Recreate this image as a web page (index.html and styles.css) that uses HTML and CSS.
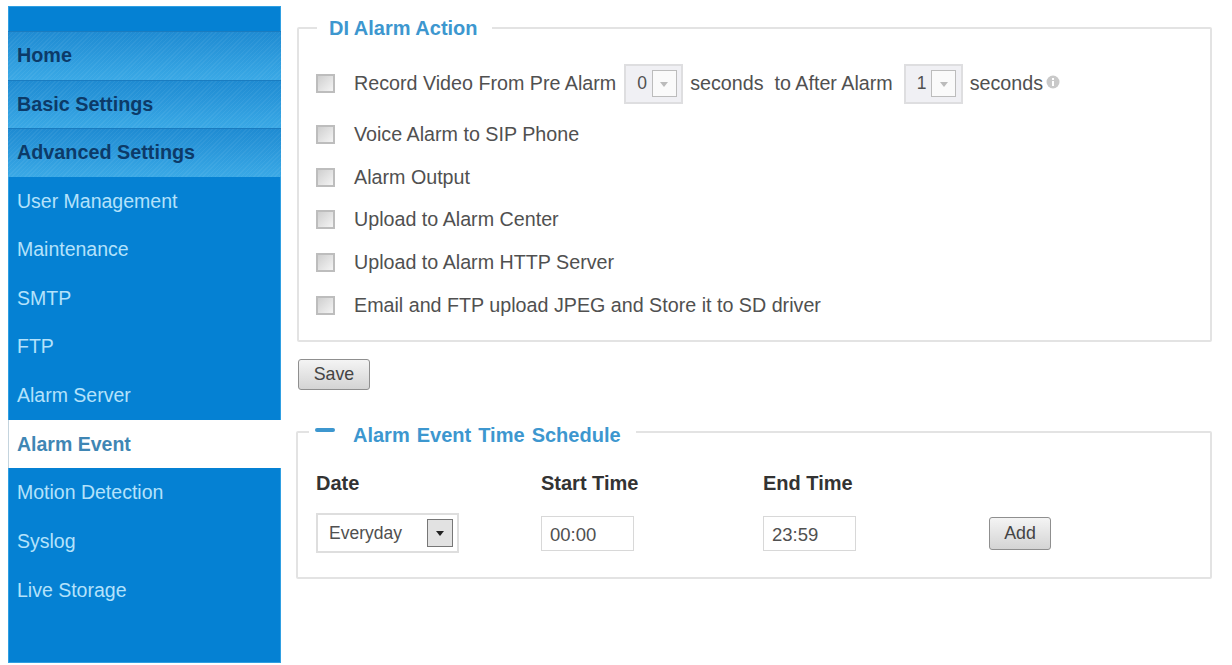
FILE: index.html
```html
<!DOCTYPE html>
<html lang="en">

<head>
    <meta charset="UTF-8">
    <title>Alarm Event</title>
    <link rel="stylesheet" href="styles.css">
</head>

<body>
    <div class="menu">
        <div class="menu-top"></div>
        <a class="menu-head" href="#">Home</a>
        <a class="menu-head" href="#">Basic Settings</a>
        <a class="menu-head" href="#">Advanced Settings</a>
        <a class="menu-item" href="#">User Management</a>
        <a class="menu-item" href="#">Maintenance</a>
        <a class="menu-item" href="#">SMTP</a>
        <a class="menu-item" href="#">FTP</a>
        <a class="menu-item" href="#">Alarm Server</a>
        <a class="menu-item active" href="#">Alarm Event</a>
        <a class="menu-item" href="#">Motion Detection</a>
        <a class="menu-item" href="#">Syslog</a>
        <a class="menu-item" href="#">Live Storage</a>
    </div>
    <div class="content">
        <fieldset class="action-box">
            <legend>DI Alarm Action</legend>
            <div class="row first-row">
                <span class="check"></span>
                <span>Record Video From Pre Alarm</span>
                <span class="num-select">0<span class="num-arrow"><i></i></span></span>
                <span>seconds&nbsp; to After Alarm</span>
                <span class="num-select second">1<span class="num-arrow"><i></i></span></span>
                <span>seconds</span>
                <svg class="info" width="14" height="14" viewBox="0 0 14 14">
                    <circle cx="7" cy="7" r="6.5" fill="#c9c9c9"></circle>
                    <rect x="6" y="6" width="2" height="5" fill="#fff"></rect>
                    <rect x="6" y="3" width="2" height="2" fill="#fff"></rect>
                </svg>
            </div>
            <div class="row"><span class="check"></span><span>Voice Alarm to SIP Phone</span></div>
            <div class="row"><span class="check"></span><span>Alarm Output</span></div>
            <div class="row"><span class="check"></span><span>Upload to Alarm Center</span></div>
            <div class="row"><span class="check"></span><span>Upload to Alarm HTTP Server</span></div>
            <div class="row"><span class="check"></span><span>Email and FTP upload JPEG and Store it to SD driver</span></div>
        </fieldset>
        <a class="btn save-btn" href="#">Save</a>
        <fieldset class="schedule-box">
            <legend><span class="minus"></span>Alarm Event Time Schedule</legend>
            <div class="schedule-grid">
                <b>Date</b>
                <b>Start Time</b>
                <b>End Time</b>
                <span></span>
                <span class="date-select">Everyday<span class="date-arrow"><i></i></span></span>
                <span class="time-input">00:00</span>
                <span class="time-input">23:59</span>
                <a class="btn add-btn" href="#">Add</a>
            </div>
        </fieldset>
    </div>
</body>

</html>
```

FILE: styles.css
```css
* {
    margin: 0;
    padding: 0;
    box-sizing: border-box;
}

a {
    text-decoration: none;
}

body {
    width: 1232px;
    height: 665px;
    overflow: hidden;
    padding: 6px 20px 0 8px;
    display: flex;
    background-color: #fff;
    font-family: "Liberation Sans", Arial, sans-serif;
    font-size: 19.7px;
    color: #505050;
}

/* left menu */
.menu {
    width: 273px;
    height: 657px;
    flex-shrink: 0;
    background-color: #0581d3;
    box-shadow: inset 0 0 0 1px #2f9fe2;
    display: flex;
    flex-direction: column;
}

.menu-top {
    height: 25px;
}

.menu-head {
    height: 48.5px;
    line-height: 46px;
    padding-left: 9px;
    font-size: 19.8px;
    font-weight: bold;
    color: #0c3a68;
    border-top: 1px solid #1a7cc0;
    background:
        repeating-linear-gradient(135deg, rgba(255, 255, 255, .05) 0 1px, transparent 1px 3px),
        linear-gradient(#1f8bd2, #3aa9e6);
}

.menu-item {
    height: 48.65px;
    line-height: 48px;
    padding-left: 9px;
    font-size: 19.5px;
    color: #b4e2fb;
}

.menu-item.active {
    background-color: #fff;
    width: 281px;
    font-weight: bold;
    color: #3f86b4;
    border-left: 1px solid #c4d4de;
    padding-left: 8px;
}

/* right side */
.content {
    width: 915px;
    margin-left: 16px;
}

fieldset {
    border: 2px solid #e3e3e3;
    border-radius: 2px;
}

legend {
    font-size: 20px;
    font-weight: bold;
    color: #3d97cf;
    height: 22px;
    line-height: 22px;
}

.action-box {
    height: 325px;
    margin-top: 11px;
    padding: 15px 0 0 17px;
}

.action-box legend {
    margin-left: 1px;
    padding: 0 14px 0 12px;
}

.row {
    display: flex;
    align-items: center;
    height: 42.75px;
}

.first-row {
    height: 59px;
}

.check {
    width: 19px;
    height: 19px;
    margin-right: 19px;
    border: 2px solid #bdbdbd;
    background: linear-gradient(135deg, #cfcfcf, #f4f4f4);
}

.num-select {
    width: 59px;
    height: 40px;
    margin: 0 7px 0 8px;
    padding-left: 11px;
    display: flex;
    align-items: center;
    font-size: 17.5px;
    background-color: #f0f0f4;
    border: 2px solid #dedee0;
}

.num-select.second {
    margin-left: 11px;
}

.num-arrow {
    width: 25px;
    height: 27px;
    margin-left: 5px;
    background-color: #fafafa;
    border: 1px solid #bcbcbc;
    display: flex;
    align-items: center;
    justify-content: center;
}

.num-arrow i {
    border: 4px solid transparent;
    border-top: 5px solid #bbb;
    margin-top: 5px;
}

.info {
    margin: 0 0 4px 3px;
}

.btn {
    display: flex;
    align-items: center;
    justify-content: center;
    height: 31px;
    border: 1px solid #8f8f8f;
    border-radius: 3px;
    background: linear-gradient(#f4f4f4, #d4d4d4);
    color: #444;
    font-size: 17.8px;
}

.save-btn {
    width: 72px;
    margin: 17px 0 27px 1px;
}

.schedule-box {
    height: 162px;
    margin-left: -1px;
    padding: 25px 0 0 18px;
}

.schedule-box legend {
    height: 30px;
    margin-left: -7px;
    padding: 6px 15px 0 6px;
    display: flex;
    align-items: center;
    word-spacing: 1.5px;
}

.minus {
    width: 20px;
    height: 4px;
    margin: 0 18px 11px 0;
    border-radius: 2px;
    background-color: #3d97cf;
}

.schedule-grid {
    display: grid;
    grid-template-columns: 225px 222px 226px 65px;
    row-gap: 19px;
    align-items: center;
}

.schedule-grid b {
    color: #333;
    font-size: 20px;
    line-height: 22px;
}

.date-select {
    width: 143px;
    height: 40px;
    padding-left: 11px;
    display: flex;
    align-items: center;
    justify-content: space-between;
    border: 2px solid #dedede;
    font-size: 17.5px;
}

.date-arrow {
    width: 26px;
    height: 28px;
    margin-right: 4px;
    display: flex;
    align-items: center;
    justify-content: center;
    background-color: #e2e2e2;
    border: 1px solid #777;
}

.date-arrow i {
    border: 4px solid transparent;
    border-top: 5px solid #222;
    margin-top: 5px;
}

.time-input {
    width: 93px;
    height: 35px;
    line-height: 36px;
    padding-left: 8px;
    border: 1px solid #d8d8d8;
    font-size: 18.5px;
}

.add-btn {
    width: 62px;
    height: 33px;
}
```
